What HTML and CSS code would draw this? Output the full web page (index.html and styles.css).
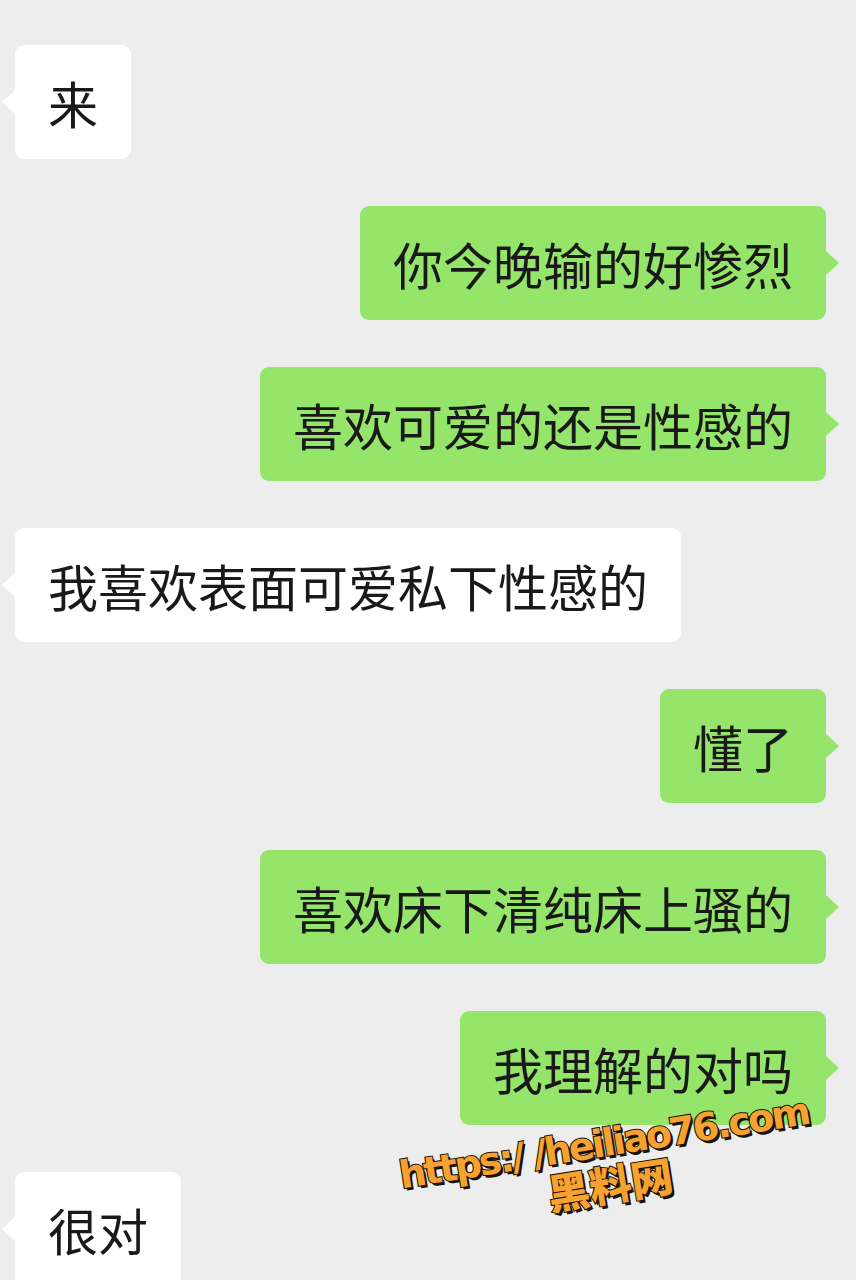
FILE: index.html
```html
<!DOCTYPE html>
<html lang="zh-CN">
<head>
    <meta charset="UTF-8">
    <title>聊天记录</title>
    <link rel="stylesheet" href="styles.css">
</head>
<body>
    <div class="chat">
        <div class="bubble left">来</div>
        <div class="bubble right">你今晚输的好惨烈</div>
        <div class="bubble right">喜欢可爱的还是性感的</div>
        <div class="bubble left">我喜欢表面可爱私下性感的</div>
        <div class="bubble right">懂了</div>
        <div class="bubble right">喜欢床下清纯床上骚的</div>
        <div class="bubble right">我理解的对吗</div>
        <div class="bubble left">很对</div>

        <div class="watermark">
            <div class="wm-url">https:/ /heiliao76.com</div>
            <div class="wm-name">黑料网</div>
        </div>
    </div>
</body>
</html>
```

FILE: styles.css
```css
body {
    margin: 0;
    background-color: #ededee;
    font-family: "Noto Sans CJK SC", "Noto Sans", sans-serif;
    overflow: hidden;
}

.chat {
    position: relative;
    height: 1280px;
    display: flex;
    flex-direction: column;
    gap: 47px;
    padding-top: 45px;
    box-sizing: border-box;
}

.bubble {
    position: relative;
    flex-shrink: 0;
    height: 114px;
    padding: 0 33px;
    display: flex;
    align-items: center;
    font-size: 50px;
    color: #191919;
    border-radius: 9px;
    white-space: nowrap;
    box-sizing: border-box;
}

.bubble.left {
    align-self: flex-start;
    margin-left: 15px;
    background-color: #ffffff;
}

.bubble.right {
    align-self: flex-end;
    margin-right: 30px;
    background-color: #95e56a;
}

/* little tails */
.bubble::before {
    content: "";
    position: absolute;
    top: 50%;
    margin-top: -12px;
    border-top: 12px solid transparent;
    border-bottom: 12px solid transparent;
}

.bubble.left::before {
    left: -13px;
    border-right: 13px solid #ffffff;
}

.bubble.right::before {
    right: -13px;
    border-left: 13px solid #95e56a;
}

.watermark {
    position: absolute;
    left: 392px;
    top: 1124px;
    width: 430px;
    text-align: center;
    white-space: nowrap;
    transform: rotate(-9deg);
    transform-origin: center;
    font-family: "DejaVu Sans", "Noto Sans CJK SC", sans-serif;
    font-weight: 900;
    color: #f6a231;
    -webkit-text-stroke: 2px #1a1208;
    paint-order: stroke fill;
    text-shadow: 2px 3px 0 #1a1208;
    line-height: 1;
}

.wm-url {
    font-size: 38px;
    letter-spacing: -2.5px;
}

.wm-name {
    font-family: "Noto Sans CJK SC", sans-serif;
    font-size: 42px;
}
```
